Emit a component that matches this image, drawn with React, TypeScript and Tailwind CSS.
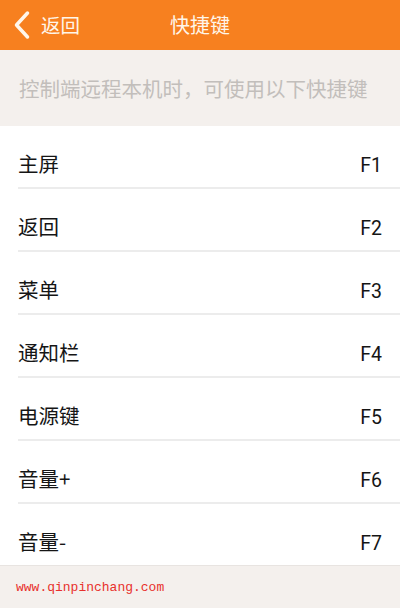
const SHORTCUTS = [
  { name: "主屏", key: "F1" },
  { name: "返回", key: "F2" },
  { name: "菜单", key: "F3" },
  { name: "通知栏", key: "F4" },
  { name: "电源键", key: "F5" },
  { name: "音量+", key: "F6" },
  { name: "音量-", key: "F7" },
];

export default function App() {
  return (
    <div
      className="w-[400px] h-[608px] overflow-hidden bg-[#f4f0ed] flex flex-col"
      style={{ fontFamily: '"Noto Sans CJK SC", "Noto Sans", sans-serif' }}
    >
      {/* 顶部栏 */}
      <div className="relative h-[50px] shrink-0 bg-[#f7801f] flex items-center justify-center">
        <div className="absolute left-[12px] top-0 h-full flex items-center gap-[9px]">
          <svg width="20" height="30" viewBox="0 0 20 30" fill="none">
            <path d="M15.5 3 L4.5 15 L15.5 27" stroke="#fff6ea" strokeWidth="3.5" strokeLinecap="round" strokeLinejoin="round" />
          </svg>
          <span className="text-[19.5px] leading-none text-[#fff6ea]">返回</span>
        </div>
        <span className="text-[20px] leading-none text-[#fff6ea]">快捷键</span>
      </div>

      {/* 提示 */}
      <div className="h-[76px] shrink-0 flex items-center px-[19px]">
        <p className="text-[20.5px] leading-none text-[#c2bebb] whitespace-nowrap">控制端远程本机时，可使用以下快捷键</p>
      </div>

      {/* 列表 */}
      <div className="bg-white shrink-0">
        {SHORTCUTS.map((s, i) => (
          <div key={s.key} className="pl-[18px]">
            <div className="flex justify-between items-baseline pr-[18px] pt-[25px] h-[61px]">
              <span className="text-[20.5px] leading-[24px] text-[#151515]">{s.name}</span>
              <span className="text-[19.5px] leading-[24px] text-[#151515]" style={{ fontFamily: "Roboto, sans-serif" }}>
                {s.key}
              </span>
            </div>
            {i < SHORTCUTS.length - 1 && <div className="h-[2px] bg-[#ececec]" />}
          </div>
        ))}
      </div>

      {/* 底部 */}
      <div className="flex-1 border-t border-[#e8e4e1] flex items-center px-[16px]">
        <span className="text-[13px] leading-none text-[#e8302c]" style={{ fontFamily: '"Liberation Mono", monospace' }}>
          www.qinpinchang.com
        </span>
      </div>
    </div>
  );
}
